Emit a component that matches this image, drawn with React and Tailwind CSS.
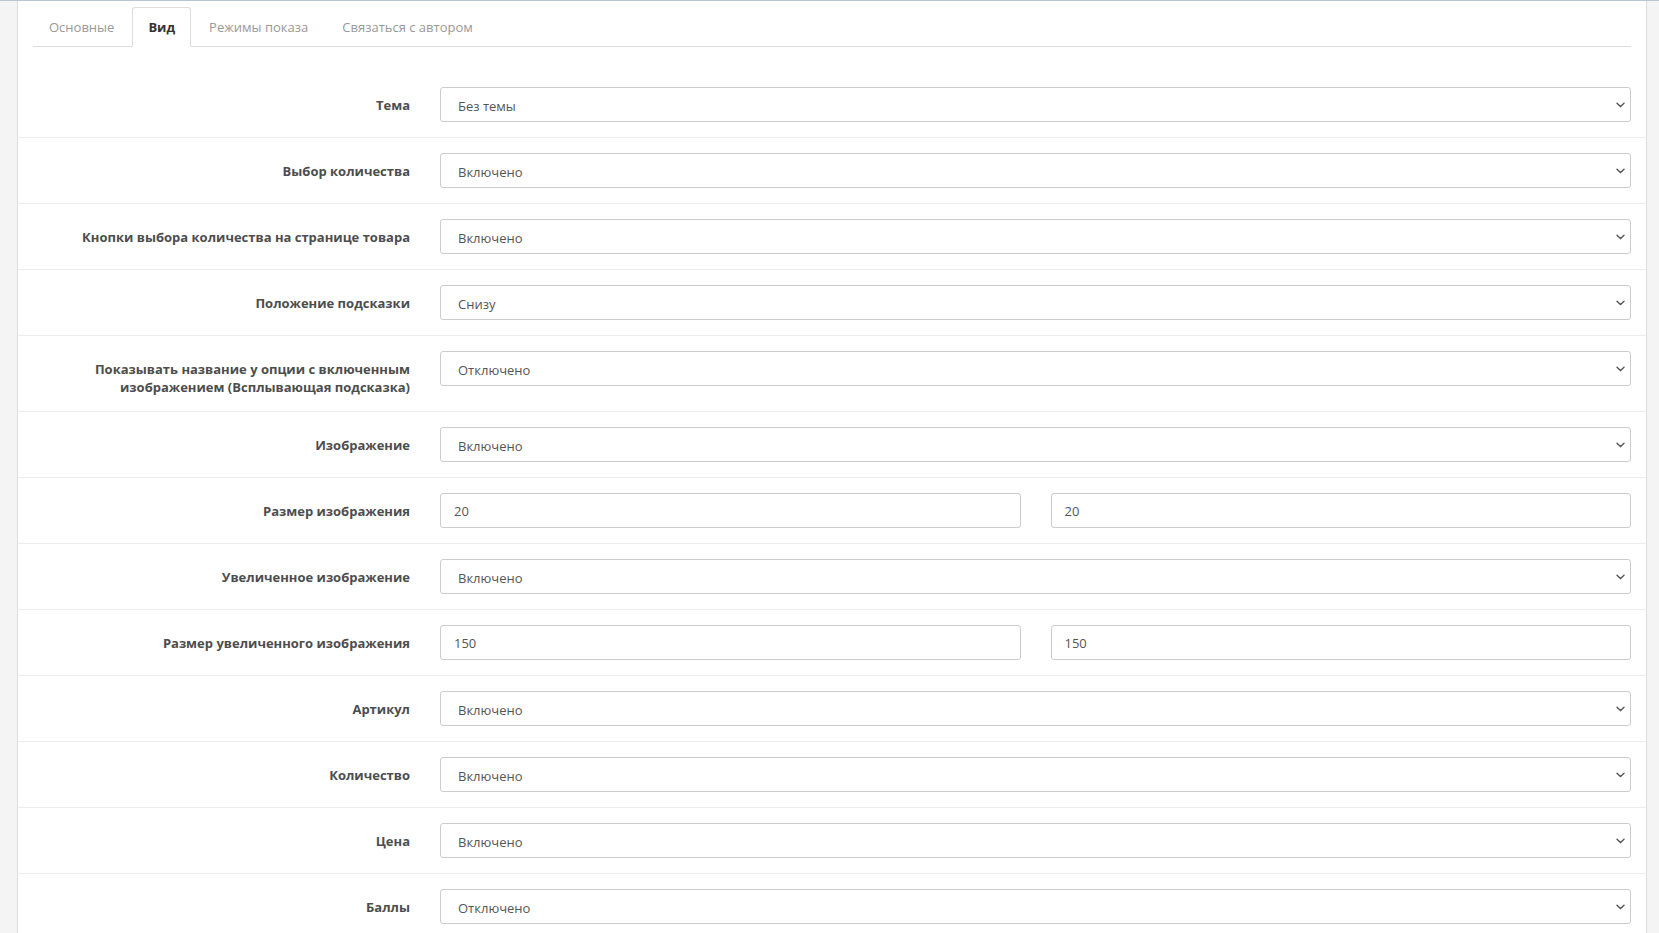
const tabs = ['Основные', 'Вид', 'Режимы показа', 'Связаться с автором'];

const rows = [
  { label: 'Тема', value: 'Без темы' },
  { label: 'Выбор количества', value: 'Включено' },
  { label: 'Кнопки выбора количества на странице товара', value: 'Включено' },
  { label: 'Положение подсказки', value: 'Снизу' },
  {
    label: ['Показывать название у опции с включенным', 'изображением (Всплывающая подсказка)'],
    value: 'Отключено',
  },
  { label: 'Изображение', value: 'Включено' },
  { label: 'Размер изображения', pair: ['20', '20'] },
  { label: 'Увеличенное изображение', value: 'Включено' },
  { label: 'Размер увеличенного изображения', pair: ['150', '150'] },
  { label: 'Артикул', value: 'Включено' },
  { label: 'Количество', value: 'Включено' },
  { label: 'Цена', value: 'Включено' },
  { label: 'Баллы', value: 'Отключено' },
];

const Chevron = () => (
  <svg width="9" height="6" viewBox="0 0 9 6" fill="none">
    <path d="M1 1.2 L4.5 4.5 L8 1.2" stroke="#555" strokeWidth="1.4" strokeLinecap="round" />
  </svg>
);

const Select = ({ value }) => (
  <div className="h-[35px] w-full flex items-center justify-between pl-[17px] pr-[5px] border border-[#ccc] rounded-[3px] bg-white text-[#555]">
    <span className="pt-[2px]">{value}</span>
    <Chevron />
  </div>
);

const Input = ({ value }) => (
  <div className="h-[35px] w-full flex items-center px-[13px] border border-[#ccc] rounded-[3px] bg-white text-[#555]">
    {value}
  </div>
);

export default function App() {
  return (
    <div
      className="min-h-screen flex bg-[#f4f4f4] border-t border-[#b9c5d1] text-[13px] leading-[18px]"
      style={{ fontFamily: "'Open Sans', 'Liberation Sans', sans-serif" }}
    >
      <div className="w-[17px] shrink-0" />
      <div className="w-[1630px] shrink-0 bg-white border-x border-[#ddd] px-[15px] pt-[6px]">
        {/* Tabs */}
        <ul className="flex border-b border-[#ddd] mb-[25px]">
          {tabs.map((t, i) => (
            <li key={t} className="-mb-px mr-[2px]">
              <span
                className={
                  i === 1
                    ? 'block px-[15px] pt-[11px] pb-[10px] leading-[17px] border border-[#ddd] border-b-white rounded-t-[3px] bg-white font-bold text-[#333]'
                    : 'block px-[15px] pt-[11px] pb-[10px] leading-[17px] border border-transparent rounded-t-[3px] text-[#999]'
                }
              >
                {t}
              </span>
            </li>
          ))}
        </ul>

        {/* Form */}
        <div className="-mx-[15px]">
          {rows.map((r, i) => (
            <div
              key={i}
              className={
                i === 0
                  ? 'flex py-[15px]'
                  : 'flex py-[15px] border-t border-[#ededed]'
              }
            >
              <div className="w-1/4 px-[15px] pt-[9px] text-right font-bold text-[#4d4d4d]">
                {Array.isArray(r.label) ? (
                  <>
                    {r.label[0]}
                    <br />
                    {r.label[1]}
                  </>
                ) : (
                  r.label
                )}
              </div>
              <div className="w-3/4 px-[15px]">
                {r.pair ? (
                  <div className="flex gap-[30px]">
                    <Input value={r.pair[0]} />
                    <Input value={r.pair[1]} />
                  </div>
                ) : (
                  <Select value={r.value} />
                )}
              </div>
            </div>
          ))}
        </div>
      </div>
    </div>
  );
}
